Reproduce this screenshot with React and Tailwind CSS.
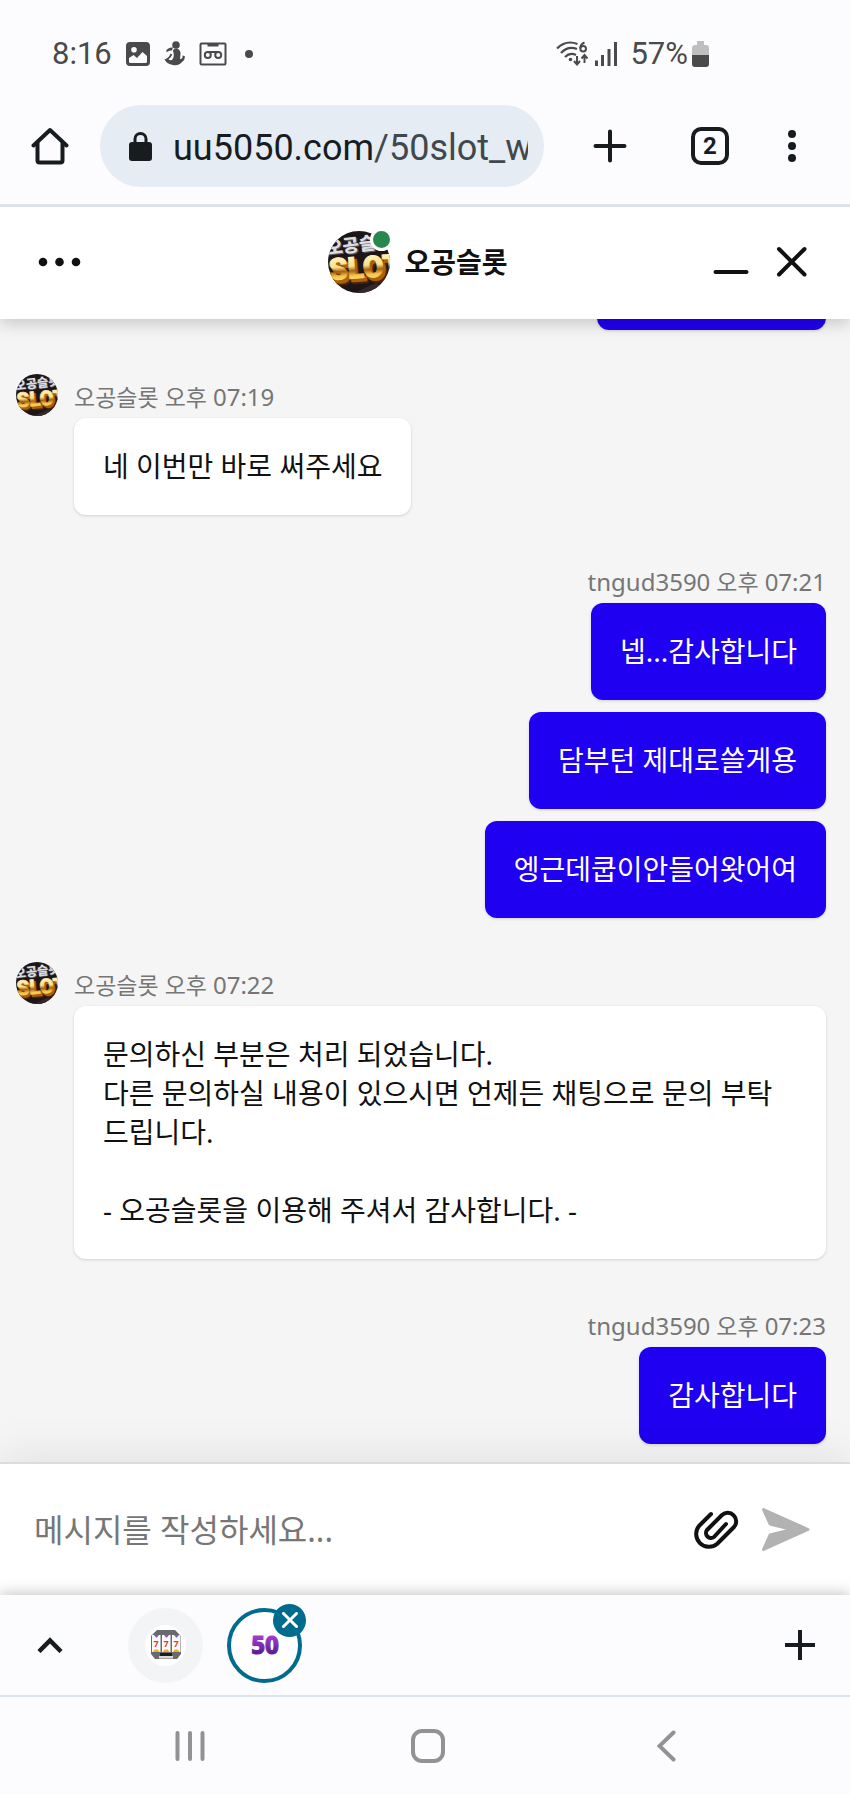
const LATIN_KR = "font-['Noto_Sans','Noto_Sans_CJK_KR',sans-serif]"
const ROBOTO = "font-['Roboto',sans-serif]"

const GROUPS = [
  { id: 1, from: 'agent', name: '오공슬롯', period: '오후', clock: '07:19', texts: ['네 이번만 바로 써주세요'] },
  { id: 2, from: 'me', name: 'tngud3590', period: '오후', clock: '07:21', texts: ['넵...감사합니다', '담부턴 제대로쓸게용', '엥근데쿱이안들어왓어여'] },
  {
    id: 3,
    from: 'agent',
    name: '오공슬롯',
    period: '오후',
    clock: '07:22',
    texts: [
      '문의하신 부분은 처리 되었습니다.\n다른 문의하실 내용이 있으시면 언제든 채팅으로 문의 부탁드립니다.\n\n- 오공슬롯을 이용해 주셔서 감사합니다. -',
    ],
  },
  { id: 4, from: 'me', name: 'tngud3590', period: '오후', clock: '07:23', texts: ['감사합니다'] },
]

/* ---------- drawings ---------- */

function SlotLogo({ className }) {
  return (
    <svg viewBox="0 0 62 62" className={`rounded-full ${className}`} role="img" aria-label="오공슬롯">
      <defs>
        <linearGradient id="gold" x1="0" y1="0" x2="0" y2="1">
          <stop offset="0.1" stopColor="#fff6c4" />
          <stop offset="0.45" stopColor="#fbe08a" />
          <stop offset="0.58" stopColor="#a8620f" />
          <stop offset="0.72" stopColor="#f6c64a" />
          <stop offset="1" stopColor="#fff0a8" />
        </linearGradient>
      </defs>
      <rect width="62" height="62" fill="#1e1519" />
      <path d="M0 44 L14 62 H0Z M30 60 L48 52 L62 58 V62 H30Z" fill="#35282b" />
      <g transform="rotate(-7 31 31)" className="font-['Noto_Sans_CJK_KR',sans-serif] font-black" fontSize="18">
        <text x="1" y="21" fill="#5c5c60">오공슬롯</text>
        <text x="0" y="20" fill="#dcdde0">오공슬롯</text>
      </g>
      <g transform="rotate(-4 31 40)" className="font-['Roboto',sans-serif] font-black" fontSize="30">
        <text x="4" y="52" fill="#4a2206" stroke="#4a2206" strokeWidth="2">SLOT</text>
        <text x="3" y="50" fill="#a8620f" stroke="#a8620f" strokeWidth="2">SLOT</text>
        <text x="1" y="47" fill="url(#gold)" stroke="url(#gold)" strokeWidth="1">SLOT</text>
      </g>
    </svg>
  )
}

function PictureIcon() {
  return (
    <svg viewBox="0 0 24 24" className="size-6">
      <path
        fillRule="evenodd"
        fill="#4a4a4a"
        d="M4 0H20A4 4 0 0 1 24 4V20A4 4 0 0 1 20 24H4A4 4 0 0 1 0 20V4A4 4 0 0 1 4 0Z M3 16V19.500A1.500 1.500 0 0 0 4.500 21H19.500A1.500 1.500 0 0 0 21 19.500V14L16.500 10L11 16L7.500 13Z M8 5A2.800 2.800 0 1 0 8 10.600A2.800 2.800 0 1 0 8 5Z"
      />
    </svg>
  )
}

function FigureIcon() {
  return (
    <svg viewBox="0 0 21 25" className="h-[25px] w-[21px]" fill="#4a4a4a">
      <circle cx="12" cy="4" r="3.800" />
      <path d="M2 10 Q4 6 9 6.500 L8 9.500 Q5 9 3 11Z" />
      <path d="M9 10 Q9 7.500 13 7.500 Q17 9 16.500 13 L16 18 Q19 18 18.500 14.500 L20.800 15 Q21 19.500 18 21 Q14.500 25 9 24 Q3 23 0.500 18.500 Q5 17 6.500 12.500 L8.300 13.500 Q7.500 16 4.500 18.300 Q6 19.500 8 19 Q11 16 9 10Z" />
    </svg>
  )
}

function VoicemailIcon() {
  return (
    <svg viewBox="0 0 28 24" className="h-6 w-7" fill="none" stroke="#4a4a4a" strokeWidth="2">
      <rect x="1.500" y="1.500" width="25" height="21" rx="1" />
      <path d="M9.500 2.500H18.500V3.500H9.500Z" fill="#4a4a4a" />
      <circle cx="8.800" cy="13" r="3" />
      <circle cx="19.200" cy="13" r="3" />
      <path d="M8.800 10H19.200" />
    </svg>
  )
}

function WifiIcon() {
  return (
    <svg viewBox="0 0 32 25" className="h-[25px] w-8" fill="none" stroke="#4a4a4a" strokeWidth="2.200">
      <path d="M1 7.500Q10 -1.500 21.500 3" />
      <path d="M5 12Q12 4.500 21 8" />
      <path d="M9 16Q14 11 20 14" />
      <circle cx="14.500" cy="18.500" r="1.800" fill="#4a4a4a" stroke="none" />
      <path d="M21 15V23M18 20L21 23.500L24 20M28.500 22V14M25.500 17.500L28.500 14L31.500 17.500" strokeWidth="2" />
      <path d="M28.500 1.500Q24 3.500 24.300 7.500" strokeWidth="2" />
      <circle cx="27.200" cy="7.800" r="2.800" strokeWidth="2" />
    </svg>
  )
}

function SignalIcon() {
  return (
    <svg viewBox="0 0 22 24" className="h-6 w-[22px]" stroke="#4a4a4a" strokeWidth="3">
      <path d="M1.500 18.500V24M7.500 13V24M14 7V24M20.500 0V24" />
    </svg>
  )
}

function BatteryIcon() {
  return (
    <svg viewBox="0 0 17 26" className="h-[26px] w-[17px]">
      <path d="M5 0H12V4H14A3 3 0 0 1 17 7V14H0V7A3 3 0 0 1 3 4H5Z" fill="#bfbfbf" />
      <path d="M0 14H17V23A3 3 0 0 1 14 26H3A3 3 0 0 1 0 23Z" fill="#4a4a4a" />
    </svg>
  )
}

function SlotMachineIcon() {
  return (
    <svg viewBox="0 0 30 30" className="size-[30px]">
      <path d="M6 0H24L30 6V24L26 29H4L0 24V6Z" fill="#6a6a6c" />
      <path d="M8 26H22V28.500H8Z" fill="#d9d9d9" />
      <path d="M9 23H21V26H9Z" fill="#1c1c1e" />
      {[1, 11, 21].map((x) => (
        <g key={x}>
          <rect x={x} y="5" width="8.500" height="17" fill="#fbfbfb" />
          <path d={`M${x + 2} 5h5l-2 2.500h-1z`} fill="#7a5be0" />
          <path d={`M${x + 1} 22l1.500-2.500h3.500l1.500 2.500z`} fill="#f4ab1c" />
          <text x={x + 4} y="17" textAnchor="middle" fontSize="9" fill="#e8372c" className="font-['Noto_Sans',sans-serif] font-bold">7</text>
        </g>
      ))}
    </svg>
  )
}

function FiftyLogo() {
  return (
    <svg viewBox="0 0 32 24" className="h-6 w-8">
      <defs>
        <linearGradient id="violet" x1="0" y1="0" x2="0" y2="1">
          <stop offset="0.2" stopColor="#a63fd6" />
          <stop offset="0.9" stopColor="#4d1580" />
        </linearGradient>
      </defs>
      <text x="16" y="21" textAnchor="middle" fontSize="24" fill="url(#violet)" stroke="url(#violet)" strokeWidth="1" className="font-['Noto_Sans',sans-serif] font-extrabold">50</text>
    </svg>
  )
}

/* ---------- sections ---------- */

function StatusBar() {
  return (
    <div className={`${ROBOTO} flex h-[105px] items-center pt-[2px] pr-[141px] pl-[52px] text-[31px] text-[#4a4a4a]`}>
      <span className="mr-[14px] pt-[2px]">8:16</span>
      <div className="flex items-center gap-[14px]">
        <PictureIcon />
        <FigureIcon />
        <VoicemailIcon />
      </div>
      <span className="ml-[18px] size-2 rounded-full bg-[#4a4a4a]" />
      <div className="ml-auto flex items-center">
        <WifiIcon />
        <span className="ml-[7px]"><SignalIcon /></span>
        <span className="mr-1 ml-[13px] pt-[2px]">57%</span>
        <BatteryIcon />
      </div>
    </div>
  )
}

function BrowserBar() {
  return (
    <div className="relative z-20 flex items-center border-b-[3px] border-[#dde3ea] bg-[#fcfcff] pr-[26px] pb-[17px]">
      <button aria-label="Home" className="flex w-[100px] shrink-0 justify-center">
        <svg viewBox="0 0 38 38" className="size-[38px]" fill="none" stroke="#191c1e" strokeWidth="4" strokeLinecap="round" strokeLinejoin="round">
          <path d="M2.500 18.500L19 3L35.500 18.500" />
          <path d="M6.500 16V33.500Q6.500 35.500 8.500 35.500H29.500Q31.500 35.500 31.500 33.500V16" />
        </svg>
      </button>
      <button className="mr-4 flex h-[82px] min-w-0 flex-1 items-center rounded-full bg-[#e5ecf3] pr-4 pl-[29px]">
        <svg viewBox="0 0 23 29" className="h-[29px] w-[23px] shrink-0">
          <path d="M6 12V7A5.500 5.500 0 0 1 17 7V12" fill="none" stroke="#191c1e" strokeWidth="3" />
          <rect y="10" width="23" height="19" rx="3" fill="#191c1e" />
        </svg>
        <span className={`${ROBOTO} ml-[21px] min-w-0 flex-1 overflow-hidden pt-1 text-left text-[36px] whitespace-nowrap text-[#191c1e]`}>
          uu5050.com<span className="text-[#41484d]">/50slot_w</span>
        </span>
      </button>
      <button aria-label="New tab" className="flex w-[100px] shrink-0 justify-center">
        <svg viewBox="0 0 34 34" className="size-[34px]" stroke="#191c1e" strokeWidth="4" strokeLinecap="round">
          <path d="M17 2.500V31.500M2.500 17H31.500" />
        </svg>
      </button>
      <button aria-label="Tabs" className="flex w-[100px] shrink-0 justify-center">
        <span className={`${ROBOTO} flex size-[38px] items-center justify-center rounded-[10px] border-4 border-[#191c1e] text-[24px] leading-none font-bold text-[#191c1e]`}>2</span>
      </button>
      <button aria-label="More" className="flex w-16 shrink-0 justify-center">
        <svg viewBox="0 0 8 34" className="h-[34px] w-2" fill="#191c1e">
          <circle cx="4" cy="5" r="4" />
          <circle cx="4" cy="17" r="4" />
          <circle cx="4" cy="29" r="4" />
        </svg>
      </button>
    </div>
  )
}

function ChatHeader() {
  return (
    <header className="relative z-10 flex h-28 shrink-0 items-center bg-white pb-[2px] shadow-[0_4px_16px_rgba(0,0,0,0.2)]">
      <div className="w-[131px] pl-[38px]">
        <button aria-label="Menu" className="block">
          <svg viewBox="0 0 44 10" className="h-[10px] w-11" fill="#111">
            <circle cx="5" cy="5" r="4.300" />
            <circle cx="21.500" cy="5" r="4.300" />
            <circle cx="38" cy="5" r="4.300" />
          </svg>
        </button>
      </div>
      <div className="flex flex-1 items-center justify-center gap-[14px]">
        <div className="relative">
          <SlotLogo className="size-[62px]" />
          <span className="absolute -top-[3px] -right-[3px] size-[23px] rounded-full border-[3px] border-white bg-[#26884f]" />
        </div>
        <h1 className={`${LATIN_KR} text-[28px] leading-[39px] font-bold text-[#111]`}>오공슬롯</h1>
      </div>
      <div className="flex w-[145px] justify-end gap-[21px] pr-[38px]">
        <button aria-label="Minimize">
          <svg viewBox="0 0 40 40" className="size-10" stroke="#111" strokeWidth="4" strokeLinecap="round">
            <path d="M4.500 30H35.500" />
          </svg>
        </button>
        <button aria-label="Close">
          <svg viewBox="0 0 40 40" className="size-10" stroke="#111" strokeWidth="4" strokeLinecap="round">
            <path d="M7 7L32.500 32.500M32.500 7L7 32.500" />
          </svg>
        </button>
      </div>
    </header>
  )
}

function MessageGroup({ group }) {
  const mine = group.from === 'me'
  return (
    <section className="mt-11 flex pr-6 pl-4">
      <div className="w-[58px] shrink-0">{!mine && <SlotLogo className="size-[42px]" />}</div>
      <div className={`flex min-w-0 flex-1 flex-col ${mine ? 'items-end' : 'items-start'}`}>
        <div className="h-11 text-[23px] leading-[46px] text-[#767676]">
          <span className={mine ? 'text-[24px]' : undefined}>{group.name}</span> {group.period}{' '}
          <span className="text-[24px]">{group.clock}</span>
        </div>
        <div className={`flex flex-col gap-3 ${mine ? 'items-end' : 'items-start'}`}>
          {group.texts.map((t) => (
            <p
              key={t}
              className={`rounded-xl p-[29px] text-[28px] leading-[39px] whitespace-pre-line shadow-[0_1px_3px_rgba(0,0,0,0.15)] ${mine ? 'bg-[#2000f0] text-white' : 'bg-white text-[#111]'}`}
            >
              {t}
            </p>
          ))}
        </div>
      </div>
    </section>
  )
}

function Composer() {
  return (
    <form className="relative flex h-[133px] shrink-0 items-center border-t-2 border-[#dcdcdc] bg-white pr-10 pl-[34px] shadow-[0_-8px_44px_rgba(0,0,0,0.08)]">
      <input
        aria-label="메시지"
        placeholder="메시지를 작성하세요..."
        className="min-w-0 flex-1 text-[32px] outline-none placeholder:text-[#767676]"
      />
      <button type="button" aria-label="Attach" className="mr-[22px]">
        <svg viewBox="0 0 46 40" className="h-10 w-[46px]" fill="none" stroke="#111" strokeWidth="4" strokeLinecap="round" strokeLinejoin="round">
          <path d="M18 4L6 16A12.800 12.800 0 0 0 24 34L41 17A8.500 8.500 0 0 0 29 5L14 20A5 5 0 0 0 21 27L33 14" />
        </svg>
      </button>
      <button type="submit" aria-label="Send">
        <svg viewBox="0 0 49 45" className="h-[45px] w-[49px]" fill="#b2b2b2" stroke="#b2b2b2" strokeWidth="3" strokeLinejoin="round">
          <path d="M2.500 2.500L47 22.500L2.500 42.500L9 28L31 22.500L9 17Z" />
        </svg>
      </button>
    </form>
  )
}

function TabStrip() {
  return (
    <div className="relative flex h-[102px] shrink-0 items-center border-b-2 border-[#dde3ea] bg-[#fcfcff] shadow-[0_-1px_14px_rgba(0,0,0,0.25)]">
      <button aria-label="Expand tabs" className="flex w-[100px] justify-center">
        <svg viewBox="0 0 26 16" className="h-4 w-[26px]" fill="none" stroke="#191c1e" strokeWidth="4.500">
          <path d="M2 14.500L13 3.500L24 14.500" />
        </svg>
      </button>
      <button aria-label="Slot tab" className="ml-7 flex size-[75px] items-center justify-center rounded-full bg-[#f2f4f6]">
        <span className="flex size-[41px] items-center justify-center rounded-full bg-white">
          <SlotMachineIcon />
        </span>
      </button>
      <div className="relative ml-6">
        <button aria-label="50 tab" className="flex size-[75px] items-center justify-center rounded-full border-4 border-[#006b8f] bg-white">
          <FiftyLogo />
        </button>
        <button aria-label="Close tab" className="absolute -top-1 -right-1 flex size-[33px] items-center justify-center rounded-full bg-[#006b8f]">
          <svg viewBox="0 0 16 16" className="size-4" stroke="#fff" strokeWidth="3" strokeLinecap="round">
            <path d="M1.500 1.500L14.500 14.500M14.500 1.500L1.500 14.500" />
          </svg>
        </button>
      </div>
      <button aria-label="Add tab" className="ml-auto flex w-[100px] justify-center">
        <svg viewBox="0 0 30 30" className="size-[30px]" stroke="#191c1e" strokeWidth="4">
          <path d="M15 0V30M0 15H30" />
        </svg>
      </button>
    </div>
  )
}

function NavBar() {
  return (
    <nav className="relative flex h-[97px] shrink-0 items-center justify-center bg-[#fcfcff] pl-[6px]">
      <button aria-label="Recents" className="flex w-[238px] justify-center">
        <svg viewBox="0 0 30 32" className="h-8 w-[30px]" stroke="#929294" strokeWidth="4" strokeLinecap="round">
          <path d="M2.500 3V29M15 3V29M27.500 3V29" />
        </svg>
      </button>
      <button aria-label="Home screen" className="flex w-[238px] justify-center">
        <span className="size-[34px] rounded-[11px] border-4 border-[#929294]" />
      </button>
      <button aria-label="Back" className="flex w-[238px] justify-center">
        <svg viewBox="0 0 19 32" className="h-8 w-[19px]" fill="none" stroke="#929294" strokeWidth="4" strokeLinecap="round">
          <path d="M16.500 2.500L2.500 16L16.500 29.500" />
        </svg>
      </button>
    </nav>
  )
}

export default function App() {
  return (
    <div className={`${LATIN_KR} flex h-screen flex-col bg-[#fcfcff]`} lang="ko">
      <StatusBar />
      <BrowserBar />
      <ChatHeader />
      <main className="flex min-h-0 flex-1 flex-col justify-end overflow-hidden bg-[#f5f5f5] pb-[18px]">
        {/* tail of the previous bubble, scrolled under the header */}
        <div className="mr-6 h-3 w-[229px] shrink-0 self-end rounded-b-xl bg-[#2000f0] shadow-[0_1px_3px_rgba(0,0,0,0.15)]" />
        {GROUPS.map((g) => (
          <MessageGroup key={g.id} group={g} />
        ))}
      </main>
      <Composer />
      <TabStrip />
      <NavBar />
    </div>
  )
}
